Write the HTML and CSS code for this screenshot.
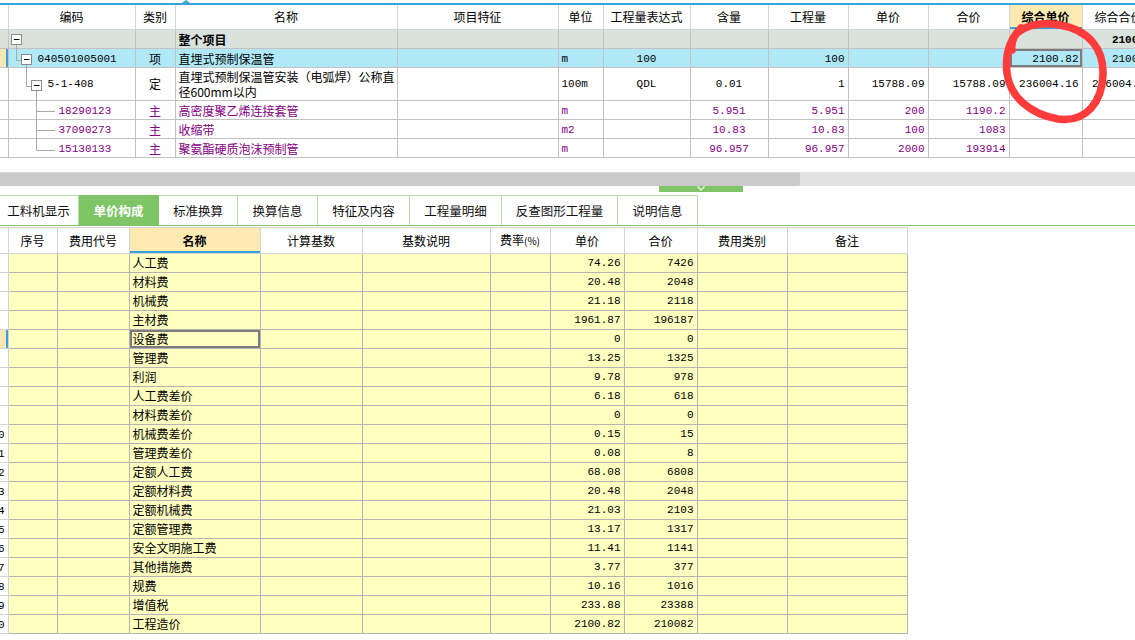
FILE: index.html
```html
<!DOCTYPE html>
<html lang="zh">
<head>
<meta charset="utf-8">
<title>单价构成</title>
<link rel="stylesheet" href="styles.css">
</head>
<body>
<div class="page">
  <div class="topline"><span class="notch"></span></div>

  <div class="topwrap">
    <table class="grid top">
      <colgroup>
        <col style="width:8px"><col style="width:127px"><col style="width:40px"><col style="width:222px"><col style="width:161px"><col style="width:45px"><col style="width:87px"><col style="width:78px"><col style="width:80px"><col style="width:80px"><col style="width:81px"><col style="width:73px"><col style="width:73px">
      </colgroup>
      <thead>
        <tr class="hrow">
          <th class="rn"></th><th>编码</th><th>类别</th><th>名称</th><th>项目特征</th><th>单位</th><th>工程量表达式</th><th>含量</th><th>工程量</th><th>单价</th><th>合价</th><th class="hl">综合单价</th><th>综合合价</th>
        </tr>
      </thead>
      <tbody>
        <tr class="grp r19">
          <td class="rn"></td><td></td><td></td><td class="b">整个项目</td><td></td><td></td><td></td><td></td><td></td><td></td><td></td><td></td><td class="num r b">210082</td>
        </tr>
        <tr class="sel r19">
          <td class="rn rsel"></td><td class="num l1">040501005001</td><td class="c">项</td><td>直埋式预制保温管</td><td></td><td class="num">m</td><td class="num c">100</td><td></td><td class="num r">100</td><td></td><td></td><td class="num r focus">2100.82</td><td class="num r">210082</td>
        </tr>
        <tr class="r33">
          <td class="rn"></td><td class="num l2">5-1-408</td><td class="c">定</td><td class="wrap">直埋式预制保温管安装（电弧焊）公称直<br>径600mm以内</td><td></td><td class="num">100m</td><td class="num c">QDL</td><td class="num c">0.01</td><td class="num r">1</td><td class="num r">15788.09</td><td class="num r">15788.09</td><td class="num r">236004.16</td><td class="num r">236004.16</td>
        </tr>
        <tr class="mat r19">
          <td class="rn"></td><td class="num l3">18290123</td><td class="c">主</td><td>高密度聚乙烯连接套管</td><td></td><td class="num">m</td><td></td><td class="num c">5.951</td><td class="num r">5.951</td><td class="num r">200</td><td class="num r">1190.2</td><td></td><td></td>
        </tr>
        <tr class="mat r19">
          <td class="rn"></td><td class="num l3">37090273</td><td class="c">主</td><td>收缩带</td><td></td><td class="num">m2</td><td></td><td class="num c">10.83</td><td class="num r">10.83</td><td class="num r">100</td><td class="num r">1083</td><td></td><td></td>
        </tr>
        <tr class="mat r19">
          <td class="rn"></td><td class="num l3">15130133</td><td class="c">主</td><td>聚氨酯硬质泡沫预制管</td><td></td><td class="num">m</td><td></td><td class="num c">96.957</td><td class="num r">96.957</td><td class="num r">2000</td><td class="num r">193914</td><td></td><td></td>
        </tr>
      </tbody>
    </table>
    <svg class="tree" width="60" height="153" viewBox="0 0 60 153">
      <g stroke="#a8a8a8" stroke-width="1" fill="none">
        <path d="M16.5 40 V55.5 H21"/>
        <path d="M26.5 59 V81.5 H31"/>
        <path d="M36.5 85 V145.5 M36.5 106.5 H55 M36.5 125.5 H55 M36.5 145.5 H55"/>
      </g>
      <g fill="#fff" stroke="#8c8c8c" stroke-width="1">
        <rect x="11.5" y="29.5" width="10" height="10"/>
        <rect x="21.5" y="49.5" width="10" height="10"/>
        <rect x="31.5" y="75.5" width="10" height="10"/>
      </g>
      <g stroke="#000" stroke-width="1">
        <path d="M14 34.5 H19.5 M24 54.5 H29.5 M34 80.5 H39.5"/>
      </g>
    </svg>
  </div>

  <div class="gap14"></div>
  <div class="hscroll"><div class="thumb"></div></div>
  <div class="splitter">
    <div class="handle">
      <svg width="10" height="6" viewBox="0 0 10 6"><path d="M1.5 0.5 L5 4 L8.5 0.5" stroke="#e8f6e0" stroke-width="1.4" fill="none"/></svg>
    </div>
  </div>

  <div class="tabbar">
    <div class="tab w80 first">工料机显示</div>
    <div class="tab w80 active">单价构成</div>
    <div class="tab w79">标准换算</div>
    <div class="tab w80">换算信息</div>
    <div class="tab w92">特征及内容</div>
    <div class="tab w92">工程量明细</div>
    <div class="tab w116">反查图形工程量</div>
    <div class="tab w80">说明信息</div>
  </div>

  <table class="grid bottom">
    <colgroup>
      <col style="width:8px"><col style="width:49px"><col style="width:72px"><col style="width:131px"><col style="width:102px"><col style="width:128px"><col style="width:60px"><col style="width:74px"><col style="width:73px"><col style="width:90px"><col style="width:120px">
    </colgroup>
    <thead>
      <tr class="hrow2">
        <th class="rn"></th><th>序号</th><th>费用代号</th><th class="hl">名称</th><th>计算基数</th><th>基数说明</th><th>费率<span class="pct">(%)</span></th><th>单价</th><th>合价</th><th>费用类别</th><th>备注</th>
      </tr>
    </thead>
    <tbody>
      <tr><td class="rn"></td><td></td><td></td><td>人工费</td><td></td><td></td><td></td><td class="num r">74.26</td><td class="num r">7426</td><td></td><td></td></tr>
      <tr><td class="rn"></td><td></td><td></td><td>材料费</td><td></td><td></td><td></td><td class="num r">20.48</td><td class="num r">2048</td><td></td><td></td></tr>
      <tr><td class="rn"></td><td></td><td></td><td>机械费</td><td></td><td></td><td></td><td class="num r">21.18</td><td class="num r">2118</td><td></td><td></td></tr>
      <tr><td class="rn"></td><td></td><td></td><td>主材费</td><td></td><td></td><td></td><td class="num r">1961.87</td><td class="num r">196187</td><td></td><td></td></tr>
      <tr><td class="rn rsel"></td><td></td><td></td><td class="focus">设备费</td><td></td><td></td><td></td><td class="num r">0</td><td class="num r">0</td><td></td><td></td></tr>
      <tr><td class="rn"></td><td></td><td></td><td>管理费</td><td></td><td></td><td></td><td class="num r">13.25</td><td class="num r">1325</td><td></td><td></td></tr>
      <tr><td class="rn"></td><td></td><td></td><td>利润</td><td></td><td></td><td></td><td class="num r">9.78</td><td class="num r">978</td><td></td><td></td></tr>
      <tr><td class="rn"></td><td></td><td></td><td>人工费差价</td><td></td><td></td><td></td><td class="num r">6.18</td><td class="num r">618</td><td></td><td></td></tr>
      <tr><td class="rn"></td><td></td><td></td><td>材料费差价</td><td></td><td></td><td></td><td class="num r">0</td><td class="num r">0</td><td></td><td></td></tr>
      <tr><td class="rn"><span class="cut">0</span></td><td></td><td></td><td>机械费差价</td><td></td><td></td><td></td><td class="num r">0.15</td><td class="num r">15</td><td></td><td></td></tr>
      <tr><td class="rn"><span class="cut">1</span></td><td></td><td></td><td>管理费差价</td><td></td><td></td><td></td><td class="num r">0.08</td><td class="num r">8</td><td></td><td></td></tr>
      <tr><td class="rn"><span class="cut">2</span></td><td></td><td></td><td>定额人工费</td><td></td><td></td><td></td><td class="num r">68.08</td><td class="num r">6808</td><td></td><td></td></tr>
      <tr><td class="rn"><span class="cut">3</span></td><td></td><td></td><td>定额材料费</td><td></td><td></td><td></td><td class="num r">20.48</td><td class="num r">2048</td><td></td><td></td></tr>
      <tr><td class="rn"><span class="cut">4</span></td><td></td><td></td><td>定额机械费</td><td></td><td></td><td></td><td class="num r">21.03</td><td class="num r">2103</td><td></td><td></td></tr>
      <tr><td class="rn"><span class="cut">5</span></td><td></td><td></td><td>定额管理费</td><td></td><td></td><td></td><td class="num r">13.17</td><td class="num r">1317</td><td></td><td></td></tr>
      <tr><td class="rn"><span class="cut">6</span></td><td></td><td></td><td>安全文明施工费</td><td></td><td></td><td></td><td class="num r">11.41</td><td class="num r">1141</td><td></td><td></td></tr>
      <tr><td class="rn"><span class="cut">7</span></td><td></td><td></td><td>其他措施费</td><td></td><td></td><td></td><td class="num r">3.77</td><td class="num r">377</td><td></td><td></td></tr>
      <tr><td class="rn"><span class="cut">8</span></td><td></td><td></td><td>规费</td><td></td><td></td><td></td><td class="num r">10.16</td><td class="num r">1016</td><td></td><td></td></tr>
      <tr><td class="rn"><span class="cut">9</span></td><td></td><td></td><td>增值税</td><td></td><td></td><td></td><td class="num r">233.88</td><td class="num r">23388</td><td></td><td></td></tr>
      <tr><td class="rn"><span class="cut">0</span></td><td></td><td></td><td>工程造价</td><td></td><td></td><td></td><td class="num r">2100.82</td><td class="num r">210082</td><td></td><td></td></tr>
    </tbody>
  </table>

  <svg class="mark" width="1135" height="640" viewBox="0 0 1135 640">
    <path d="M1021 28 C1009 40 1005 56 1007 73 C1010 97 1030 114 1058 119 C1087 123 1102 101 1103 75 C1104 49 1089 30 1060 25 C1041 22 1027 25 1017 33 C1013 38 1011 44 1012 50" fill="none" stroke="#ff3b3b" stroke-width="7.5" stroke-linecap="round" stroke-linejoin="round"/>
  </svg>
</div>
</body>
</html>
```
FILE: styles.css
```css
html, body {
  margin: 0;
  padding: 0;
  background: #ffffff;
}
body {
  width: 1135px;
  height: 640px;
  overflow: hidden;
  font-family: "Noto Sans CJK SC", "Noto Sans", sans-serif;
  font-size: 12px;
  color: #000;
}
.page {
  position: relative;
  width: 1135px;
  height: 640px;
  overflow: hidden;
}
.topline {
  height: 5px;
  box-sizing: border-box;
  border-bottom: 2px solid #3ba3d9;
  position: relative;
}
.notch {
  position: absolute;
  left: 182px;
  top: 0;
  width: 0;
  height: 0;
  border-left: 4px solid transparent;
  border-right: 4px solid transparent;
  border-bottom: 3px solid #3ba3d9;
}
.topwrap {
  position: relative;
  height: 153px;
}
.grid {
  border-collapse: collapse;
  table-layout: fixed;
}
.grid td, .grid th {
  padding: 0 3px;
  white-space: nowrap;
  overflow: hidden;
  line-height: 16px;
  font-weight: normal;
  text-align: left;
}
.top {
  width: 1155px;
}
.top th {
  height: 24px;
  border: 1px solid #d6d6d6;
  border-top: none;
  text-align: center;
  background: #fff;
}
.top td {
  border: 1px solid #c2c2c2;
}
.top tr.r19 td { height: 17px; padding-top: 1px; }
.top tr.r33 td { height: 32px; }
.top .rn { padding: 0; border-left: none; }
.grp td { background: #d9e2dd; }
.sel td { background: #b0e8f8; }
.mat td { color: #840084; }
.top .wrap { line-height: 15px; }
.b { font-weight: bold !important; }
.c { text-align: center !important; }
.r { text-align: right !important; }
.num {
  font-family: "Liberation Mono", "DejaVu Sans Mono", monospace;
  font-size: 11px;
}
.pct {
  font-size: 10px;
}
.l1 { padding-left: 29px !important; }
.l2 { padding-left: 39px !important; }
.l3 { padding-left: 50px !important; }
.hl {
  background: #fdeab2 !important;
  font-weight: bold !important;
  box-shadow: inset 0 -2px 0 #3aa0d8;
}
.focus {
  box-shadow: inset 0 0 0 2px #7c7c7c;
}
.rsel {
  background: #fde7b4 !important;
  box-shadow: inset -2px 0 0 #3aa0d8;
}
.tree {
  position: absolute;
  left: 0;
  top: 0;
  pointer-events: none;
}
.gap14 { height: 14px; }
.hscroll {
  height: 14px;
  background: #e2e2e2;
}
.thumb {
  width: 800px;
  height: 14px;
  background: #c9c9c9;
  border-radius: 0 2px 2px 0;
  border-top: 1px solid #d8d8d8;
  box-sizing: border-box;
}
.splitter {
  height: 9px;
}
.handle {
  margin-left: 659px;
  width: 84px;
  height: 6px;
  background: #80c468;
  display: flex;
  justify-content: center;
  align-items: flex-start;
}
.handle svg { display: block; }
.tabbar {
  display: flex;
  height: 30px;
  border-bottom: 1px solid #80c468;
  margin-bottom: 1px;
}
.tab {
  box-sizing: border-box;
  height: 30px;
  border-top: 1px solid #b6e0a6;
  border-right: 1px solid #b6e0a6;
  display: flex;
  align-items: center;
  justify-content: center;
  font-size: 12.5px;
  color: #111;
  background: #fff;
}
.tab.first { margin-left: -1px; }
.tab.active {
  background: #80c468;
  color: #fff;
  font-weight: bold;
  border-color: #80c468;
}
.w79 { width: 79px; }
.w80 { width: 80px; }
.w92 { width: 92px; }
.w116 { width: 116px; }
.bottom {
  width: 907px;
}
.bottom th {
  height: 25px;
  border: 1px solid #d4d4d4;
  text-align: center;
  background: #fff;
}
.bottom td {
  height: 18px;
  border: 1px solid #b4b4b4;
  background: #ffffc0;
}
.bottom td.rn, .bottom th.rn {
  background: #fff;
  padding: 0;
  border-left: none;
}
.bottom td.rn {
  border-color: #d4d4d4;
}
.cut {
  display: inline-block;
  margin-left: -2px;
  font-family: "Liberation Mono", monospace;
  font-size: 11px;
}
.mark {
  position: absolute;
  left: 0;
  top: 0;
  pointer-events: none;
}
```
